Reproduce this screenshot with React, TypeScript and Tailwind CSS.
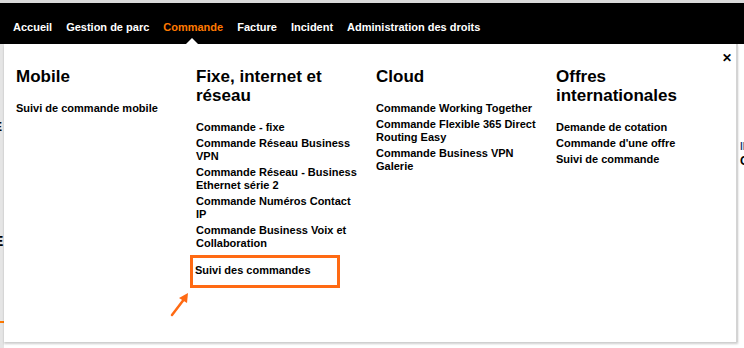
import React from "react";

const font = { fontFamily: '"Liberation Sans", Arial, sans-serif' };

type Item = { lines: string; highlight?: boolean };

const columns: { title: string[]; items: Item[] }[] = [
  { title: ["Mobile"], items: [{ lines: "Suivi de commande mobile" }] },
  {
    title: ["Fixe, internet et", "réseau"],
    items: [
      { lines: "Commande - fixe" },
      { lines: "Commande Réseau Business VPN" },
      { lines: "Commande Réseau - Business Ethernet série 2" },
      { lines: "Commande Numéros Contact IP" },
      { lines: "Commande Business Voix et Collaboration" },
      { lines: "Suivi des commandes", highlight: true },
    ],
  },
  {
    title: ["Cloud"],
    items: [
      { lines: "Commande Working Together" },
      { lines: "Commande Flexible 365 Direct Routing Easy" },
      { lines: "Commande Business VPN Galerie" },
    ],
  },
  {
    title: ["Offres", "internationales"],
    items: [
      { lines: "Demande de cotation" },
      { lines: "Commande d'une offre" },
      { lines: "Suivi de commande" },
    ],
  },
];

const nav = ["Accueil", "Gestion de parc", "Commande", "Facture", "Incident", "Administration des droits"];

export default function App() {
  return (
    <div className="relative w-[744px] h-[348px] overflow-hidden bg-white" style={font}>
      {/* top nav */}
      <div className="h-[3px] bg-[#d9d9d9]" />
      <div className="relative h-[41px] bg-black flex items-center gap-[14px] pl-[13px] pt-[8px]">
        {nav.map((n) => (
          <span
            key={n}
            className={`text-[11px] font-bold whitespace-nowrap ${n === "Commande" ? "text-[#ff7900]" : "text-white"}`}
          >
            {n}
          </span>
        ))}
        <div className="absolute left-[186px] bottom-0 w-0 h-0 border-l-[6px] border-r-[6px] border-b-[6px] border-l-transparent border-r-transparent border-b-white" />
      </div>

      {/* underlying page, mostly hidden behind the menu */}
      <div className="flex h-[304px]">
        <div className="w-[4px] bg-[#e5e5e5] flex flex-col overflow-hidden text-[12px] font-bold leading-[14px] pt-[56px]">
          <span className="-ml-[5px] text-[#1a3a7a]">t</span>
          <span className="-ml-[6px] mt-[6px] text-black">E</span>
          <span className="-ml-[6px] mt-[100px] text-black text-[14px]">E</span>
          <div className="mt-[73px] h-[2px] bg-[#ff7900]" />
        </div>
        <div className="flex-1" />
        <div className="w-[6px] flex flex-col overflow-hidden text-[12px] font-bold leading-[14px] pt-[96px] pl-[2px]">
          <span className="text-[#1a3a7a] text-[10px]">ll</span>
          <span className="text-black">C</span>
        </div>
      </div>

      {/* dropdown menu panel (overlays page) */}
      <div className="absolute left-[4px] top-[44px] w-[734px] h-[298px] bg-white border-r-2 border-[#d4d4d4] shadow-[0_2px_2px_rgba(0,0,0,0.2)]">
        <button className="absolute right-[4px] top-[8px] text-[12px] font-bold text-black leading-none">✕</button>
        <div className="grid grid-cols-[180px_180px_180px_180px] pl-[12px] pt-[23px]">
          {columns.map((c, ci) => (
            <div key={ci} className="pr-[12px]">
              <h2 className="text-[17px] font-bold text-black leading-[19px] mb-[16px]">
                {c.title.map((t) => (
                  <div key={t}>{t}</div>
                ))}
              </h2>
              <ul className="flex flex-col gap-[3px]">
                {c.items.map((it) => (
                  <li
                    key={it.lines}
                    className={
                      it.highlight
                        ? "relative text-[11px] font-bold leading-[13px] text-black mt-[2px] -ml-[6px] w-[150px] border-[3px] border-[#ff6a13] px-[2px] pt-[6px] pb-[8px]"
                        : "text-[11px] font-bold leading-[13px] text-black"
                    }
                  >
                    {it.lines}
                    {it.highlight && (
                      <svg className="absolute left-[-24px] top-[34px]" width="22" height="26" viewBox="0 0 22 26">
                        <line x1="3" y1="23" x2="16" y2="6" stroke="#ff6a13" strokeWidth="2.5" strokeLinecap="round" />
                        <polygon points="19,1 18,11 10,6" fill="#ff6a13" />
                      </svg>
                    )}
                  </li>
                ))}
              </ul>
            </div>
          ))}
        </div>
      </div>
    </div>
  );
}
